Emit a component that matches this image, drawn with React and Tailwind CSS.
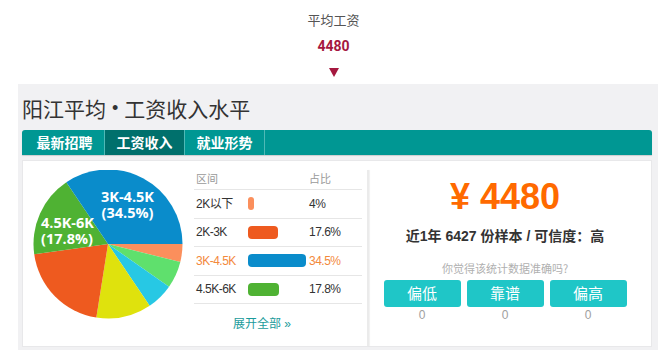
import React from "react";

const slices = [
  { from: 0, to: 14, color: "#fb8f5c" },
  { from: 14, to: 35, color: "#5fe06d" },
  { from: 35, to: 56, color: "#27c8e4" },
  { from: 56, to: 99, color: "#dfe20d" },
  { from: 99, to: 172, color: "#ee5a1f" },
  { from: 172, to: 236, color: "#4fb233" },
  { from: 236, to: 360, color: "#0a8ccb" },
];

function Pie() {
  const cx = 75, cy = 74, r = 74.5;
  const pt = (a) => {
    const t = (a * Math.PI) / 180;
    return [cx + r * Math.cos(t), cy + r * Math.sin(t)];
  };
  return (
    <svg width="150" height="150" viewBox="0 0 150 150">
      {slices.map((s, i) => {
        const [x1, y1] = pt(s.from);
        const [x2, y2] = pt(s.to);
        const large = s.to - s.from > 180 ? 1 : 0;
        return (
          <path
            key={i}
            d={`M${cx},${cy} L${x1},${y1} A${r},${r} 0 ${large} 1 ${x2},${y2} Z`}
            fill={s.color}
          />
        );
      })}
      <g
        fill="#ffffff"
        fontFamily="'Open Sans', 'DejaVu Sans', sans-serif"
        fontWeight="700"
        fontSize="14.5"
      >
        <text x="94.5" y="32" textAnchor="middle">3K-4.5K</text>
        <text x="94.5" y="48" textAnchor="middle">(34.5%)</text>
        <text x="8" y="57.5">4.5K-6K</text>
        <text x="8" y="73.5">(17.8%)</text>
      </g>
    </svg>
  );
}

const rows = [
  { label: "2K以下", w: 6, color: "#fb8f5c", pct: "4%" },
  { label: "2K-3K", w: 30, color: "#ee5a1f", pct: "17.6%" },
  { label: "3K-4.5K", w: 58, color: "#0a8ccb", pct: "34.5%", hl: true },
  { label: "4.5K-6K", w: 31, color: "#4fb233", pct: "17.8%" },
];

const sans = "font-['Liberation_Sans','Noto_Sans_CJK_SC',sans-serif]";

export default function App() {
  return (
    <div className={`w-[667px] h-[357px] bg-white ${sans}`}>
      <div className="flex flex-col items-center pt-[10px]">
        <div className="h-[20px] leading-[20px] text-[13px] text-[#555] font-['Noto_Sans_CJK_SC',sans-serif]">
          平均工资
        </div>
        <div className="mt-[6px] h-[20px] leading-[20px] text-[14px] font-bold text-[#a5183f] font-['Roboto','Liberation_Sans',sans-serif]">
          4480
        </div>
        <div className="mt-[6px] h-[20px] flex items-center justify-center">
          <svg width="10" height="9" viewBox="0 0 10 9">
            <polygon points="0,0 10,0 5,9" fill="#a5183f" />
          </svg>
        </div>
      </div>

      <div className="mt-[2px] ml-[18px] w-[640px] h-[266px] bg-[#f1f1f3] pl-[4px] pr-[6px] pt-[10px]">
        <div className="h-[28px] leading-[28px] text-[21px] text-[#333] font-['Noto_Sans_CJK_SC',serif] flex items-center">
          <span>阳江平均</span>
          <span className="mx-[6px] text-[18px] font-['Liberation_Sans',sans-serif]">•</span>
          <span>工资收入水平</span>
        </div>
        <div className="mt-[8px] h-[25px] bg-[#009793] rounded-t-[3px] flex text-white text-[14px] font-semibold font-['Noto_Sans_CJK_SC',sans-serif] shadow-[0_1px_1px_rgba(0,0,0,0.15)]">
          <div className="w-[83px] flex items-center justify-center border-r border-[#4fb9b6] pl-[3px]">最新招聘</div>
          <div className="w-[80px] flex items-center justify-center border-r border-[#4fb9b6] bg-[#00706c]">工资收入</div>
          <div className="w-[80px] flex items-center justify-center border-r border-[#4fb9b6]">就业形势</div>
        </div>

        <div className="mt-[5px] h-[187px] bg-white border border-[#e8e8ea] flex">
          <div className="ml-[10px] pt-[9px]">
            <Pie />
          </div>

          <div className="ml-[11px] w-[168px] pt-[7px]">
            <div className="h-[22px] flex items-center border-b border-[#e6e6e6] text-[11px] text-[#9a9a9a] font-['Noto_Sans_CJK_SC',sans-serif]">
              <div className="w-[54px] pl-[2px]">区间</div>
              <div className="w-[61px]"></div>
              <div>占比</div>
            </div>
            {rows.map((r) => (
              <div
                key={r.label}
                className={`h-[28.5px] flex items-center border-b border-[#e6e6e6] text-[12px] tracking-[-0.5px] ${r.hl ? "text-[#f3893c]" : "text-[#333]"}`}
              >
                <div className="w-[54px] pl-[2px]">{r.label}</div>
                <div className="w-[61px] flex items-center">
                  <div
                    className="h-[13px] rounded-[4px]"
                    style={{ width: r.w + "px", backgroundColor: r.color }}
                  />
                </div>
                <div>{r.pct}</div>
              </div>
            ))}
            <div className="mt-[12px] pl-[39px] h-[16px] leading-[16px] text-[12px] text-[#1a9b9b]">
              展开全部 »
            </div>
          </div>

          <div className="ml-[5px] mt-[9px] w-[2px] bg-[#ebebeb] shadow-[1px_0_1px_rgba(0,0,0,0.06)]" />

          <div className="flex-1 pr-[10px] flex flex-col items-center">
            <div className="mt-[16px] h-[40px] leading-[40px] text-[36px] font-bold text-[#ff6a00]">
              ¥ 4480
            </div>
            <div className="mt-[9px] h-[20px] leading-[20px] text-[14px] font-bold text-[#333]">
              近1年 6427 份样本 / 可信度：高
            </div>
            <div className="mt-[14px] h-[16px] leading-[16px] text-[11px] text-[#b0b0b0] font-['Noto_Sans_CJK_SC',sans-serif]">
              你觉得该统计数据准确吗?
            </div>
            <div className="mt-[4px] flex gap-[6px]">
              {["偏低", "靠谱", "偏高"].map((t) => (
                <div key={t} className="w-[77px] flex flex-col items-center">
                  <div className="w-[77px] h-[27px] rounded-[3px] bg-[#1fc6c7] text-white text-[15px] flex items-center justify-center font-['Noto_Sans_CJK_SC',sans-serif]">
                    {t}
                  </div>
                  <div className="h-[16px] leading-[16px] text-[12px] text-[#a0a0a0]">0</div>
                </div>
              ))}
            </div>
          </div>
        </div>
      </div>
    </div>
  );
}
